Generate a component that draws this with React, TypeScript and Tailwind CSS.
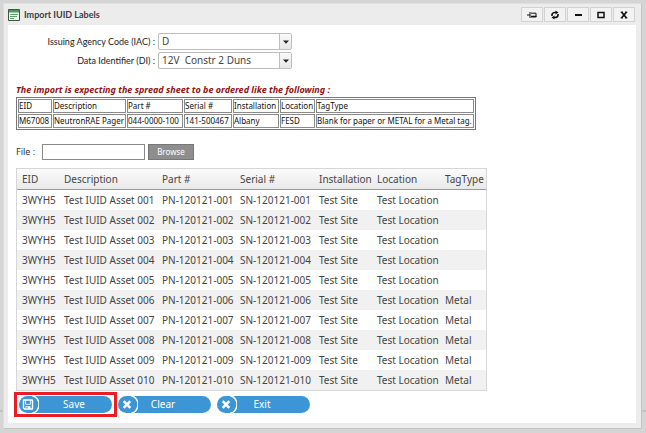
import { ReactNode } from "react";

const sampleHead = ["EID", "Description", "Part #", "Serial #", "Installation", "Location", "TagType"];
const sampleRow = [
  "M67008",
  "NeutronRAE Pager",
  "044-0000-100",
  "141-500467",
  "Albany",
  "FESD",
  "Blank for paper or METAL for a Metal tag.",
];

const assets = Array.from({ length: 10 }, (_, i) => {
  const n = String(i + 1).padStart(3, "0");
  return [
    "3WYH5",
    `Test IUID Asset ${n}`,
    `PN-120121-${n}`,
    `SN-120121-${n}`,
    "Test Site",
    "Test Location",
    i >= 5 ? "Metal" : "",
  ];
});

function WindowButton({ label, children }: { label: string; children: ReactNode }) {
  return (
    <button
      type="button"
      aria-label={label}
      className="flex h-[15px] w-[22px] items-center justify-center border border-[#d2d2d2] bg-[#f2f2f2] text-[#111]"
    >
      <svg viewBox="0 0 12 10" className="h-[10px] w-[12px]" fill="none" stroke="currentColor">
        {children}
      </svg>
    </button>
  );
}

function Field({ id, label, value }: { id: string; label: string; value: string }) {
  return (
    <div className="flex items-center gap-[3px]">
      <label htmlFor={id} className="w-[139px] text-right font-['Lato','Noto_Sans',sans-serif] text-[9px] leading-[14px] text-[#222]">
        {label}
      </label>
      <div className="relative">
        <select
          id={id}
          className="block h-[17px] w-[134px] appearance-none rounded-[2px] border border-[#bdbdbd] bg-white pl-[3px] text-[10px] leading-[15px] whitespace-pre text-[#444]"
        >
          <option>{value}</option>
        </select>
        <span className="pointer-events-none absolute inset-y-px right-px flex w-[12px] items-center justify-center border-l border-[#bdbdbd] bg-linear-to-b from-[#fafafa] to-[#e6e6e6]">
          <svg viewBox="0 0 6 4" className="h-[4px] w-[6px]" fill="#222">
            <path d="M0 0.5h6L3 3.8z" />
          </svg>
        </span>
      </div>
    </div>
  );
}

function PillButton({ label, icon }: { label: string; icon: "save" | "cross" }) {
  return (
    <button
      type="button"
      className="flex h-[17px] w-[93px] items-center overflow-hidden rounded-full bg-[#3c96d6] text-[10px] text-white"
    >
      <svg viewBox="0 0 20 17" className="h-[17px] w-[20px] shrink-0" fill="none">
        <path d="M13 -0.5a9.3 9.3 0 0 1 0 18" stroke="#fff" strokeWidth="1.5" />
        {icon === "save" ? (
          <>
            <path d="M4.500 4.500q0-0.500 0.500-0.500h8q0.500 0 0.500 0.500v8q0 0.500-0.500 0.500H5.500l-1-1z" stroke="#fff" strokeWidth="1.400" />
            <path d="M6.500 4v4.300h5V4" stroke="#fff" strokeWidth="0.800" />
            <path d="M6.500 10.200h5v2.800h-5z" fill="#fff" />
            <path d="M7.500 11h1.200v1.500H7.500z" fill="#3c96d6" />
          </>
        ) : (
          <path d="M5.700 5.200l6.600 6.600M12.300 5.200l-6.600 6.600" stroke="#fff" strokeWidth="2.6" />
        )}
      </svg>
      <span className={icon === "save" ? "flex-1 pr-[3px] text-center" : "flex-1 pr-[23px] text-center"}>
        {label}
      </span>
    </button>
  );
}

export default function App() {
  return (
    <div className="relative min-h-screen bg-[#d5d5d5] px-[4px] pt-[3px] pb-[4px] pl-[3px] font-['Noto_Sans',Tahoma,sans-serif] text-[#333]">
      <div className="absolute inset-x-0 top-[410px] h-[2px] bg-[#c2c2c2]" />
      <main className="relative border border-[#dfdfdf] border-r-[#c4c4c4] border-b-[#c4c4c4] bg-[#ececec] pr-[5px] pb-[5px] pl-[4px]">
        <header className="flex h-[21px] items-center pr-px">
          <svg viewBox="0 0 12 12" className="h-[12px] w-[12px]">
            <path d="M0.5 0.5h11v11H0.5z" fill="#f4f8f4" stroke="#3f5345" />
            <path d="M1 1h10v2.5H1z" fill="#4d9a5f" />
            <path d="M2 5.5h8M2 7.5h7M2 9.5h4" stroke="#5d9e6b" />
          </svg>
          <h1 className="ml-[4px] flex-1 font-['Lato','Noto_Sans',sans-serif] text-[9px] font-bold text-[#3b3b46]">
            Import IUID Labels
          </h1>
          <div className="flex gap-px">
            <WindowButton label="Pin">
              <path d="M1 5h3M4 2v6M5 3.2h5v3.6H5" />
              <path d="M5 6.5h5.5" strokeWidth="1.5" />
            </WindowButton>
            <WindowButton label="Refresh">
              <path d="M3 6V4.5Q3.500 2.500 6 2.500H7M9 4v1.500Q8.500 7.500 6 7.500H5" strokeWidth="1.6" />
              <path d="M6.500 0.500l3 2-3 2zM5.500 5.500l-3 2 3 2z" fill="currentColor" stroke="none" />
            </WindowButton>
            <WindowButton label="Minimize">
              <path d="M3 5h7" strokeWidth="2" />
            </WindowButton>
            <WindowButton label="Maximize">
              <path d="M3 2.500h6v5H3z" strokeWidth="1.500" />
            </WindowButton>
            <WindowButton label="Close">
              <path d="M3.500 2l5 6M8.500 2l-5 6" strokeWidth="1.800" />
              <path d="M2.500 2h2.500M7 2h2.500M2.500 8h2.500M7 8h2.500" strokeWidth="0.800" />
            </WindowButton>
          </div>
        </header>

        <section className="bg-white px-[8px] pt-[8px] pb-[10px]">
          <form className="flex flex-col gap-[2px]">
            <Field id="iac" label="Issuing Agency Code (IAC) :" value="D" />
            <Field id="di" label="Data Identifier (DI) :" value={"12V\u00a0 Constr 2 Duns"} />
          </form>

          <p className="mt-[14px] text-[9px] leading-[14px] font-bold text-[#8f1212] italic">
            The import is expecting the spread sheet to be ordered like the following :
          </p>
          <table className="w-[460px] table-fixed border-separate border-spacing-[1px] border border-[#777] text-[8px] leading-[12px] whitespace-nowrap text-[#111]">
            <colgroup>
              <col className="w-[34px]" />
              <col className="w-[73px]" />
              <col className="w-[56px]" />
              <col className="w-[48px]" />
              <col className="w-[46px]" />
              <col className="w-[35px]" />
              <col />
            </colgroup>
            <tbody>
              {[sampleHead, sampleRow].map((row) => (
                <tr key={row[0]}>
                  {row.map((cell) => (
                    <td key={cell} className="border border-[#8a8a8a] px-0">
                      {cell}
                    </td>
                  ))}
                </tr>
              ))}
            </tbody>
          </table>

          <div className="mt-[14px] flex items-center">
            <label htmlFor="file" className="w-[26px] text-[9px] leading-[14px]">
              File :
            </label>
            <input id="file" type="text" className="h-[16px] w-[103px] border border-[#888] bg-white px-1 text-[10px]" />
            <button
              type="button"
              className="ml-[3px] h-[16px] w-[46px] border border-[#777] bg-[#8e8e8e] text-[8px] leading-[14px] text-white"
            >
              Browse
            </button>
          </div>

          <table className="mt-[8px] w-[471px] table-fixed border-separate border-spacing-0 border border-[#d6d6d6] text-left text-[10px] leading-[20px] whitespace-nowrap text-[#444]">
            <colgroup>
              <col className="w-[42px]" />
              <col className="w-[98px]" />
              <col className="w-[78px]" />
              <col className="w-[79px]" />
              <col className="w-[58px]" />
              <col className="w-[68px]" />
              <col />
            </colgroup>
            <thead>
              <tr className="bg-linear-to-b from-[#fbfbfb] to-[#e8e8e8]">
                {sampleHead.map((h) => (
                  <th key={h} scope="col" className="h-[20px] border-b border-[#999] px-[5px] font-normal">
                    {h}
                  </th>
                ))}
              </tr>
            </thead>
            <tbody>
              {assets.map((row) => (
                <tr key={row[1]} className="even:bg-[#f1f1f1]">
                  {row.map((cell, i) => (
                    <td key={i} className="h-[20px] px-[5px] leading-[19px]">
                      {cell}
                    </td>
                  ))}
                </tr>
              ))}
            </tbody>
          </table>

          <div className="mt-[5px] ml-[3px] flex gap-[6px]">
            <div className="relative">
              <PillButton label="Save" icon="save" />
              <span className="pointer-events-none absolute -inset-x-[5px] -inset-y-[4px] border-[3px] border-[#ec1c24]" />
            </div>
            <PillButton label="Clear" icon="cross" />
            <PillButton label="Exit" icon="cross" />
          </div>
        </section>
      </main>
    </div>
  );
}
